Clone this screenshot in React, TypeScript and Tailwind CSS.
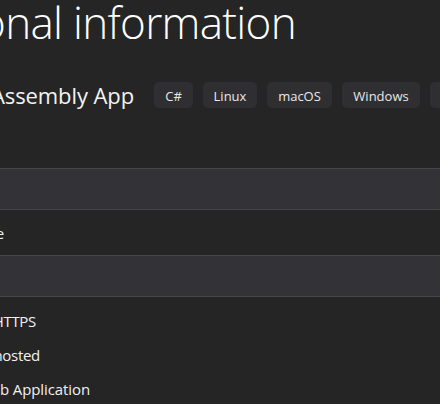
const tags = ['C#', 'Linux', 'macOS', 'Windows', 'Blazor'];
const tagWidths = ['w-[39px]', 'w-[54px]', 'w-[65px]', 'w-[78px]', 'w-[64px]'];

const options = [
  { label: 'Configure for HTTPS', end: 'w-[36px]', track: 'tracking-[-0.3px]' },
  { label: 'ASP.NET Core hosted', end: 'w-[40px]', track: 'tracking-[-0.3px]' },
  { label: 'Progressive Web Application', end: 'w-[90px]', track: 'tracking-[-0.1px]' },
];

export default function App() {
  return (
    <div
      className="w-[440px] h-[404px] overflow-hidden bg-[#252526] text-white"
      style={{ fontFamily: '"Open Sans", "Noto Sans", sans-serif' }}
    >
      {/* header, clipped at the left edge */}
      <div className="h-[48px] w-[296px] flex justify-end whitespace-nowrap">
        <h1 className="text-[44px] leading-[48px] font-light tracking-[-0.7px] -mt-[2px]">Additional information</h1>
      </div>

      <div className="mt-[34px] h-[26px] flex items-center whitespace-nowrap">
        <div className="w-[134px] shrink-0 flex justify-end">
          <h2 className="text-[22px] leading-[26px] font-normal tracking-[-0.1px] text-[#f3f3f3]">Blazor WebAssembly App</h2>
        </div>
        <div className="ml-[20px] flex gap-[10px]">
          {tags.map((tag, i) => (
            <span
              key={tag}
              className={`${tagWidths[i]} shrink-0 h-[26px] rounded-[5px] bg-[#2f2f31] flex items-center justify-center text-[13px] leading-[26px] pt-[1px] text-[#e8e8e8]`}
            >
              {tag}
            </span>
          ))}
        </div>
      </div>

      {/* framework dropdown */}
      <div className="mt-[60px] h-[42px] w-[440px] bg-[#333337] border-y border-[#46464a] flex items-center whitespace-nowrap">
        <span className="text-[15px] text-[#f1f1f1] -ml-[320px]">.NET 7.0 (Standard Term Support)</span>
      </div>

      <div className="h-[45px] flex items-center">
        <div className="w-[4px] flex justify-end whitespace-nowrap">
          <span className="text-[15px] leading-[20px] tracking-[-0.2px] text-[#f1f1f1]">Authentication type</span>
        </div>
      </div>

      {/* auth dropdown */}
      <div className="h-[42px] w-[440px] bg-[#333337] border-y border-[#46464a] flex items-center whitespace-nowrap">
        <span className="text-[15px] text-[#f1f1f1] -ml-[320px]">None</span>
      </div>

      <div className="mt-[7px] flex flex-col">
        {options.map((opt) => (
          <div key={opt.label} className="h-[34px] flex items-center">
            <div className={`${opt.end} flex justify-end whitespace-nowrap`}>
              <span className={`text-[15px] leading-[34px] ${opt.track} text-[#f1f1f1]`}>{opt.label}</span>
            </div>
          </div>
        ))}
      </div>
    </div>
  );
}
